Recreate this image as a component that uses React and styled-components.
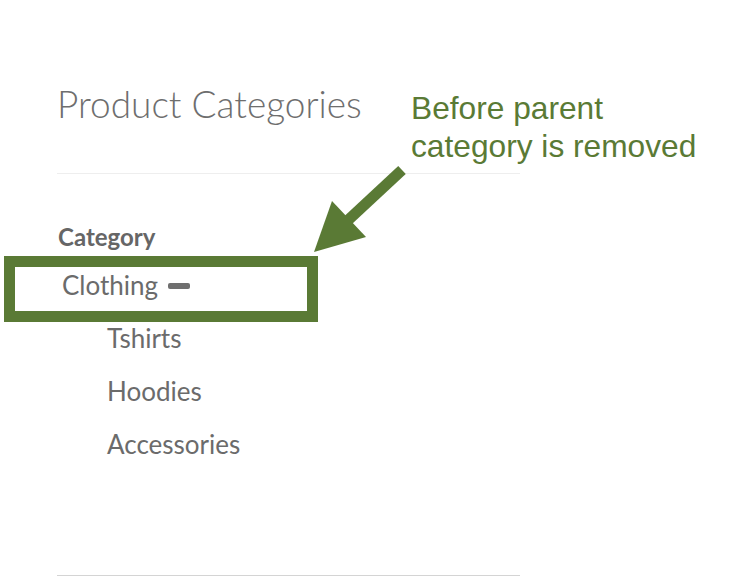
import styled, { createGlobalStyle } from "styled-components"

const GlobalStyle = createGlobalStyle`
  body {
    margin: 0;
    background: #fff;
  }
`

const Page = styled.div`
  position: relative;
  width: 756px;
  height: 576px;
  overflow: hidden;
  font-family: "Lato", "Liberation Sans", sans-serif;
  color: #6b6b6b;
`

const Panel = styled.section`
  width: 463px;
  margin-left: 57px;
  padding-top: 80px;
`

const Title = styled.h1`
  margin: 0;
  padding-bottom: 45px;
  font-size: 37px;
  font-weight: 300;
  line-height: 48px;
  color: #6e6e6e;
  border-bottom: 1px solid #eeeeee;
`

const TreeBox = styled.div`
  padding: 49px 0 105px 1px;
  border-bottom: 2px solid #d4d4d4;
`

const TreeLabel = styled.div`
  font-size: 24px;
  font-weight: 700;
  line-height: 28px;
  color: #666;
`

const List = styled.ul`
  list-style: none;
  margin: 7px 0 0;
  padding: 0;
`

const Item = styled.li`
  display: flex;
  align-items: center;
  gap: 10px;
  padding-left: ${(p) => (p.$child ? 49 : 4)}px;
  height: 53px;
  font-size: 26px;
  color: #6b6b6b;
`

const Collapse = styled.span`
  display: inline-block;
  width: 22px;
  height: 6px;
  border-radius: 2px;
  background: #6f6f6f;
  margin-top: 2px;
`

const Highlight = styled.div`
  position: absolute;
  left: 4px;
  top: 256px;
  width: 314px;
  height: 66px;
  box-sizing: border-box;
  border: 11px solid #5a7a35;
`

const Note = styled.p`
  position: absolute;
  left: 411px;
  top: 89px;
  margin: 0;
  font-family: "Liberation Sans", Arial, sans-serif;
  font-size: 31.7px;
  line-height: 38px;
  color: #5a7a35;
`

const Arrow = styled.svg`
  position: absolute;
  left: 0;
  top: 0;
`

const categories = [
  { name: "Clothing", open: true },
  { name: "Tshirts", child: true },
  { name: "Hoodies", child: true },
  { name: "Accessories", child: true },
]

const App = () => {
  return (
    <Page>
      <GlobalStyle />
      <Panel>
        <Title>Product Categories</Title>
        <TreeBox>
          <TreeLabel>Category</TreeLabel>
          <List>
            {categories.map((c) => (
              <Item key={c.name} $child={c.child}>
                {c.name}
                {c.open && <Collapse />}
              </Item>
            ))}
          </List>
        </TreeBox>
      </Panel>

      <Highlight />
      <Arrow width="756" height="576" viewBox="0 0 756 576">
        <line x1="402" y1="170" x2="345" y2="223" stroke="#5a7a35" strokeWidth="11" />
        <polygon points="314,252 332,201 366,237" fill="#5a7a35" />
      </Arrow>
      <Note>
        Before parent
        <br />
        category is removed
      </Note>
    </Page>
  )
}

export default App
